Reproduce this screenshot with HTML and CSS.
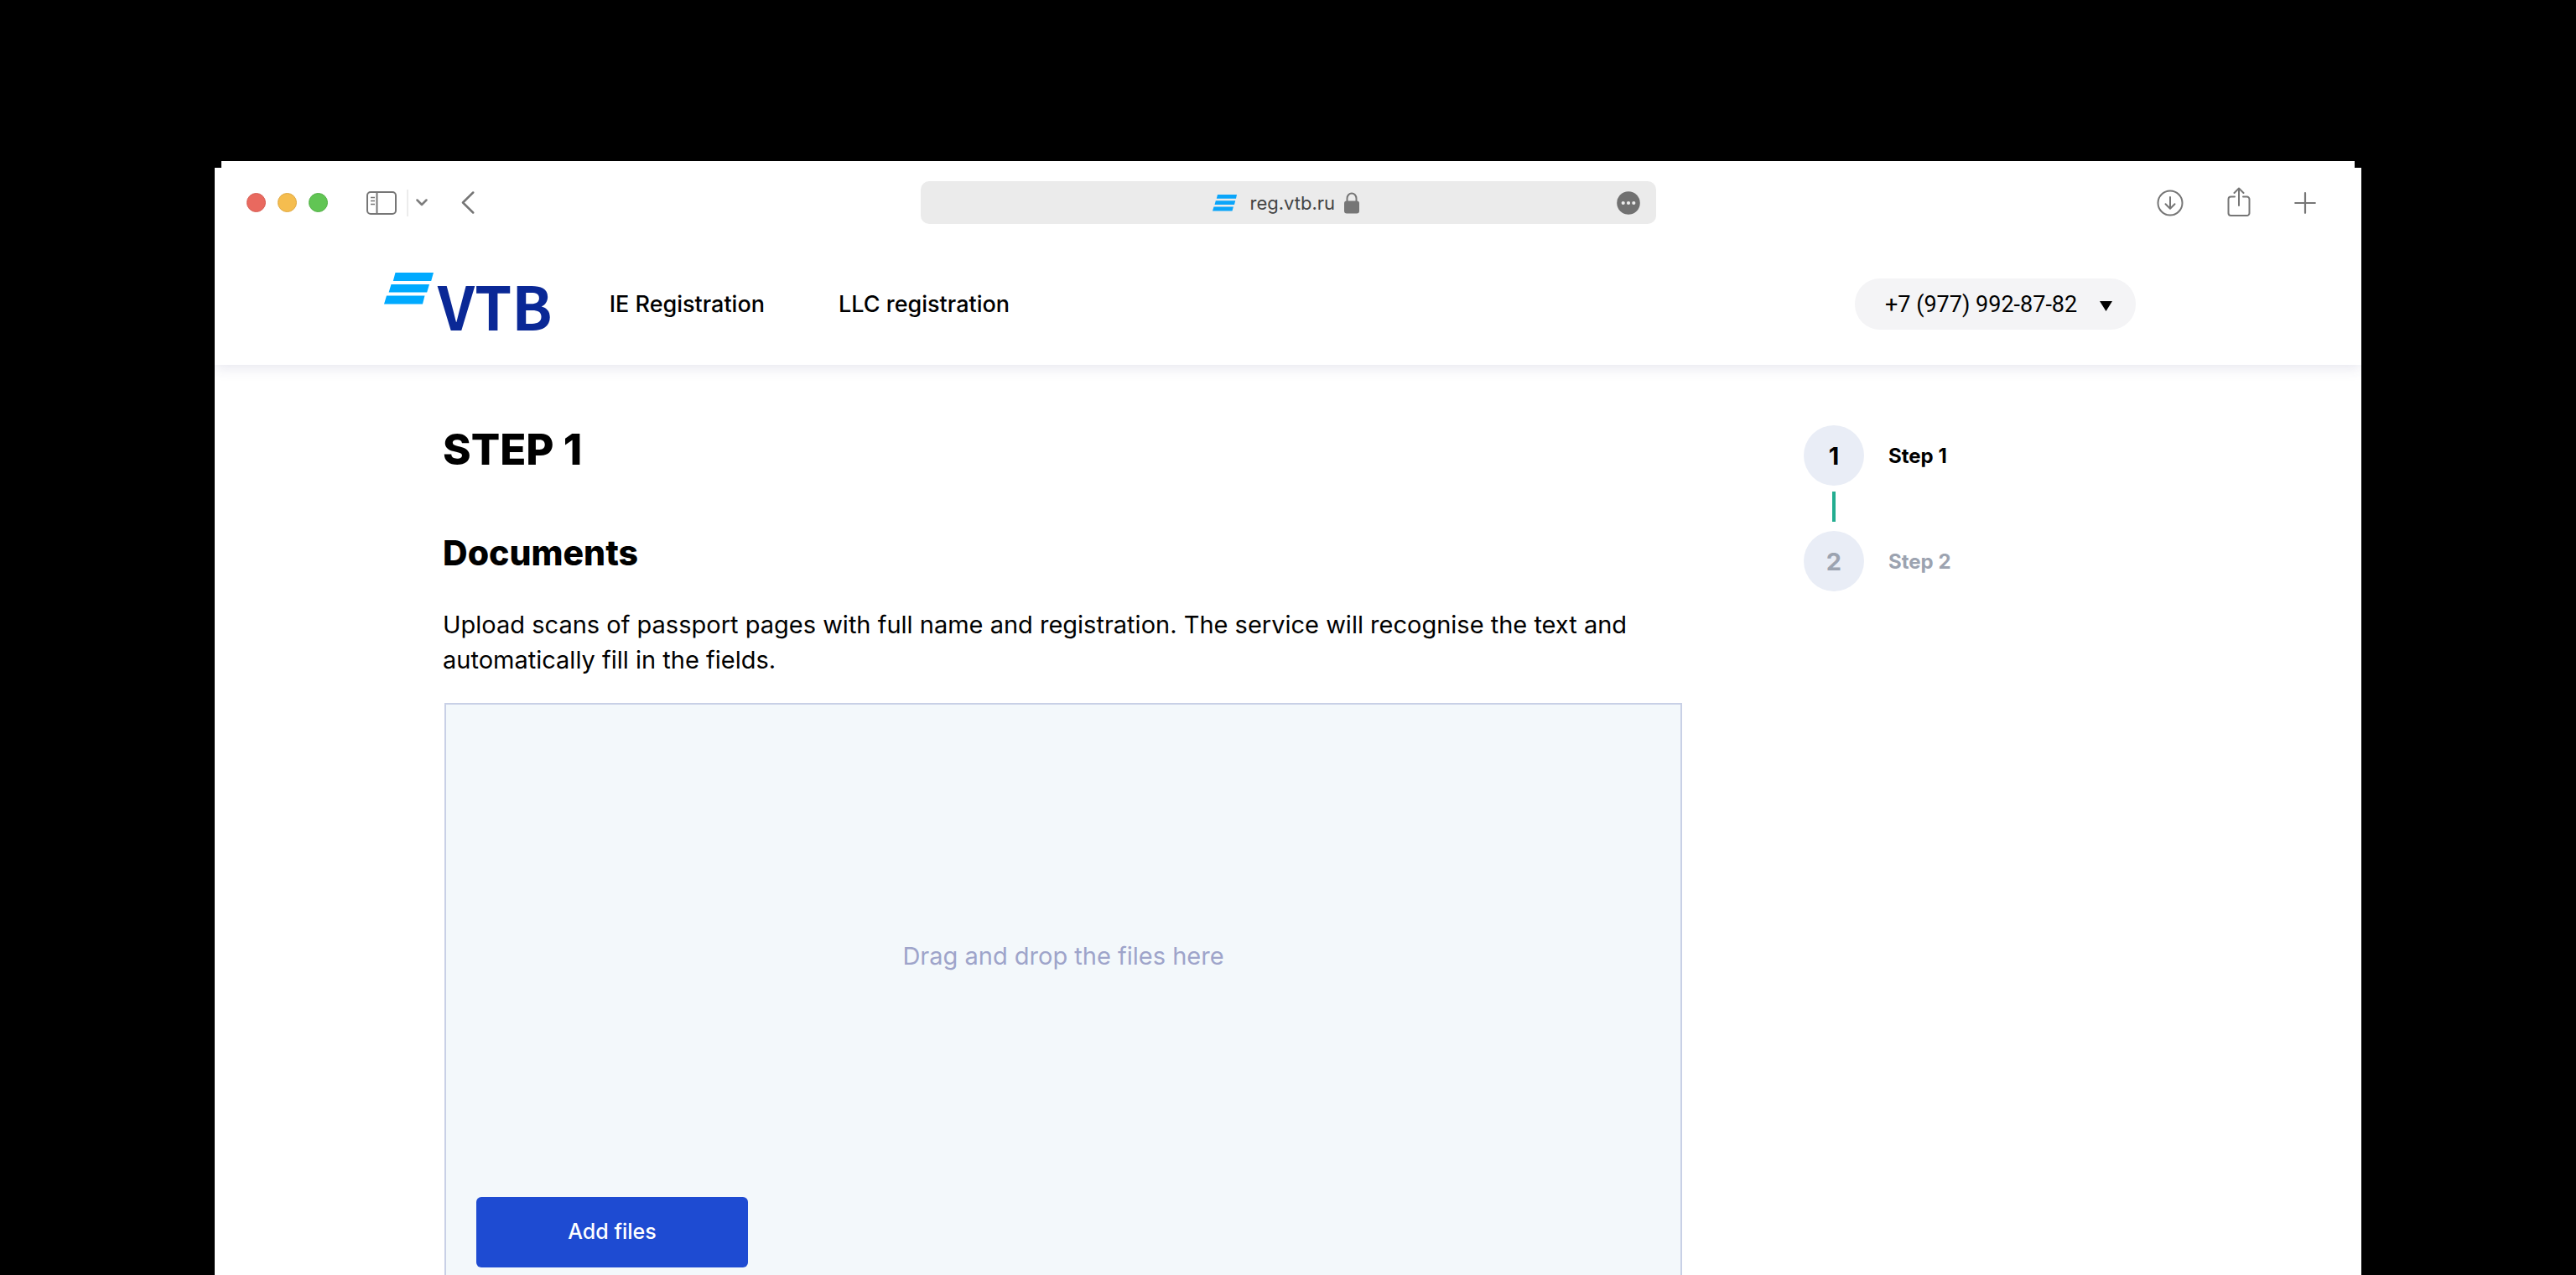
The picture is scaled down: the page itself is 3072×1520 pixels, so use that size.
FILE: index.html
```html
<!DOCTYPE html>
<html lang="en">
<head>
<meta charset="utf-8">
<title>VTB – Registration</title>
<link rel="stylesheet" href="styles.css">
</head>
<body>
<div class="window">
  <div class="toolbar">
    <div class="toolbar-side">
      <div class="lights">
        <button class="light light-close" aria-label="Close"></button>
        <button class="light light-min" aria-label="Minimise"></button>
        <button class="light light-max" aria-label="Zoom"></button>
      </div>
      <button class="tool tool-sidebar" aria-label="Sidebar">
        <svg width="36" height="28" viewBox="0 0 36 28" fill="none" stroke="#767676" stroke-width="2"><rect x="1" y="1" width="34" height="26" rx="4"/><path d="M12.500 1v26"/><path d="M5 7.500h5M5 11.500h5M5 15.500h5" stroke-width="1.500"/></svg>
      </button>
      <span class="divider"></span>
      <button class="tool tool-groups" aria-label="Tab groups">
        <svg width="14" height="9" viewBox="0 0 14 9" fill="none" stroke="#7d7d7d" stroke-width="2.500" stroke-linecap="round" stroke-linejoin="round"><path d="M1.500 1.500 7 7l5.500-5.500"/></svg>
      </button>
      <button class="tool" aria-label="Back">
        <svg width="16" height="27" viewBox="0 0 16 27" fill="none" stroke="#767676" stroke-width="2.500" stroke-linecap="round" stroke-linejoin="round"><path d="M14.200 1.500 2 13.500l12.200 12"/></svg>
      </button>
    </div>
    <div class="address">
      <svg class="favicon" width="30" height="20" viewBox="0 0 30 20" fill="#0aa5fa"><path d="M6 0h23l-1 4.800H4.800zM3.800 7.200h23.400L26 12H2.500zM1.500 14.600h23.400L23.500 19.500H0z"/></svg>
      <input class="url" type="text" value="reg.vtb.ru" aria-label="Address">
      <svg class="lock" width="18" height="26" viewBox="0 0 18 26"><path d="M3.500 12V7.500a5.500 6 0 0 1 11 0V12" fill="none" stroke="#767676" stroke-width="2"/><rect y="10.500" width="18" height="15" rx="3" fill="#767676"/></svg>
      <button class="tool" aria-label="Page menu">
        <svg width="28" height="28" viewBox="0 0 28 28"><circle cx="14" cy="14" r="13.800" fill="#717171"/><g fill="#ececec"><circle cx="7.700" cy="14" r="2.100"/><circle cx="14" cy="14" r="2.100"/><circle cx="20.300" cy="14" r="2.100"/></g></svg>
      </button>
    </div>
    <div class="toolbar-side toolbar-end">
      <button class="tool" aria-label="Downloads">
        <svg width="32" height="32" viewBox="0 0 32 32" fill="none" stroke="#767676" stroke-width="2" stroke-linecap="round" stroke-linejoin="round"><circle cx="16" cy="16" r="14.500"/><path d="M16 9v13.500M10.500 17.300l5.500 5.500 5.500-5.500"/></svg>
      </button>
      <button class="tool tool-share" aria-label="Share">
        <svg width="28" height="36" viewBox="0 0 28 36" fill="none" stroke="#767676" stroke-width="2" stroke-linecap="round" stroke-linejoin="round"><path d="M9 11.500H4.500a3 3 0 0 0-3 3V31a3 3 0 0 0 3 3h19a3 3 0 0 0 3-3V14.500a3 3 0 0 0-3-3H19M14 22V2M8.500 7 14 1.500 19.500 7"/></svg>
      </button>
      <button class="tool" aria-label="New tab">
        <svg width="26" height="26" viewBox="0 0 26 26" fill="none" stroke="#767676" stroke-width="2.200" stroke-linecap="round"><path d="M13 1.200v23.600M1.200 13h23.600"/></svg>
      </button>
    </div>
  </div>

  <header class="header">
    <a class="logo" href="#" aria-label="VTB">
      <svg class="logo-mark" width="60" height="38" viewBox="0 0 60 38" fill="#00aaff"><path d="M13.500 0H59l-2.800 10H10.800zM8.500 14H54l-2.800 9.500H5.600zM3 27.500h45.500L46 37.500H0z"/></svg>
      <span class="logo-text">VTB</span>
    </a>
    <nav class="nav">
      <a href="#">IE Registration</a>
      <a href="#">LLC registration</a>
    </nav>
    <div class="phone">
      <select class="phone-select" aria-label="Phone number"><option>+7 (977) 992-87-82</option></select>
      <svg class="phone-arrow" width="15" height="12" viewBox="0 0 15 12"><path d="M0 0h15L7.500 12z"/></svg>
    </div>
  </header>

  <main class="main">
    <section class="content">
      <h1>STEP 1</h1>
      <h2>Documents</h2>
      <p class="lead">Upload scans of passport pages with full name and registration. The service will recognise the text and automatically fill in the fields.</p>
      <div class="dropzone">
        <p class="hint">Drag and drop the files here</p>
        <button class="add">Add files</button>
      </div>
    </section>
    <ol class="steps">
      <li class="step step-current"><span class="badge">1</span>Step 1</li>
      <li class="step"><span class="badge">2</span>Step 2</li>
    </ol>
  </main>
</div>
</body>
</html>
```
FILE: styles.css
```css
* { box-sizing: border-box; }

body {
  margin: 0;
  height: 100vh;
  padding-top: 192px;
  display: flex;
  flex-direction: column;
  align-items: center;
  background: #000;
  color: #000;
  font-family: Inter, "Liberation Sans", sans-serif;
}

button, input, select {
  border: 0;
  margin: 0;
  padding: 0;
  background: none;
  color: inherit;
  font: inherit;
}

svg { display: block; }
a { color: inherit; text-decoration: none; }

.window {
  flex: 1;
  width: calc(100% * 5 / 6);
  display: flex;
  flex-direction: column;
  background: #fff;
  clip-path: polygon(8px 0, calc(100% - 8px) 0, calc(100% - 8px) 8px, 100% 8px, 100% 100%, 0 100%, 0 8px, 8px 8px);
}

/* Browser toolbar */
.toolbar {
  position: relative;
  z-index: 1;
  height: 99px;
  padding: 0 38px;
  display: grid;
  grid-template-columns: 1fr 877px 1fr;
  align-items: center;
  background: #fff;
}

.toolbar-side { display: flex; align-items: center; }
.toolbar-end { justify-content: flex-end; gap: 52px; padding-right: 16px; }
.lights { display: flex; gap: 14px; margin-right: 46px; }

.light { width: 23px; height: 23px; border-radius: 50%; }
.light-close { background: #e9695f; border: 1px solid #d65f56; }
.light-min { background: #f5bd4f; border: 1px solid #dfa944; }
.light-max { background: #61c554; border: 1px solid #54b048; }

.divider { width: 2px; height: 32px; margin: 0 9px 0 12px; background: #ececec; }
.tool-groups { margin-right: 40px; }
.tool-share { margin-bottom: 2px; }

.address {
  height: 51px;
  padding: 0 19px 0 348px;
  display: flex;
  align-items: center;
  border-radius: 10px;
  background: #ebebeb;
}

.url {
  width: 104px;
  margin: 0 8px 0 15px;
  font-size: 22px;
  line-height: 28px;
  color: #444;
}

.lock { margin-right: auto; }

/* Site header */
.header {
  height: 144px;
  padding: 0 269px 1px 202px;
  display: flex;
  align-items: center;
  box-shadow: 0 4px 16px rgba(60, 60, 120, 0.12);
}

.logo {
  display: flex;
  align-items: flex-start;
  height: 76px;
  margin-right: 68px;
}

.logo-text {
  margin: 2px 0 0 4px;
  font-family: "Noto Sans CJK SC", "Liberation Sans", sans-serif;
  font-weight: 700;
  font-size: 71px;
  line-height: 72px;
  color: #0a2896;
}

.nav {
  flex: 1;
  display: flex;
  gap: 88px;
  font-size: 27px;
  line-height: 32px;
  font-weight: 500;
}

.phone { position: relative; }

.phone-select {
  width: 335px;
  height: 61px;
  padding: 0 56px 0 36px;
  appearance: none;
  border-radius: 30px;
  background: #f4f4f6;
  font-family: Roboto, sans-serif;
  font-size: 27px;
}

.phone-arrow { position: absolute; right: 28px; top: 27px; pointer-events: none; }

/* Page */
.main {
  flex: 1;
  padding: 72px 269px 0 272px;
  display: grid;
  grid-template-columns: minmax(0, 1fr) 396px;
  column-gap: 145px;
}

.content { display: flex; flex-direction: column; }

h1 { margin: 0; font-size: 51px; line-height: 58px; font-weight: 800; }
h2 { margin: 68px 0 0; font-size: 41px; line-height: 52px; font-weight: 800; }
.lead { margin: 39px 0 0; font-size: 29px; line-height: 42px; }

.dropzone {
  flex: 1;
  margin: 30px 0 0 2px;
  padding: 12px 36px 9px;
  display: flex;
  flex-direction: column;
  border: 2px solid #c8d0e6;
  border-bottom: 0;
  background: #f3f8fb;
}

.hint { margin: auto; font-size: 29px; line-height: 36px; color: #9ea4ca; }

.add {
  width: 324px;
  height: 84px;
  padding-bottom: 2px;
  border-radius: 6px;
  background: #1e4bd2;
  color: #fff;
  font-size: 25px;
  font-weight: 500;
}

.steps { margin: 0; padding: 0; list-style: none; }

.step {
  display: flex;
  align-items: center;
  gap: 29px;
  font-size: 24px;
  font-weight: 700;
  color: #9ca3b0;
}

.step-current { color: #000; }

.step + .step {
  flex-wrap: wrap;
  row-gap: 11px;
}

/* Connector between two badges */
.step + .step::before {
  content: "";
  flex: 0 0 4px;
  height: 36px;
  margin: 7px 300px 0 34px;
  background: #23ad90;
}

.badge {
  width: 72px;
  height: 72px;
  display: grid;
  place-items: center;
  border-radius: 50%;
  background: #e9edf6;
  font-size: 29px;
}
```
